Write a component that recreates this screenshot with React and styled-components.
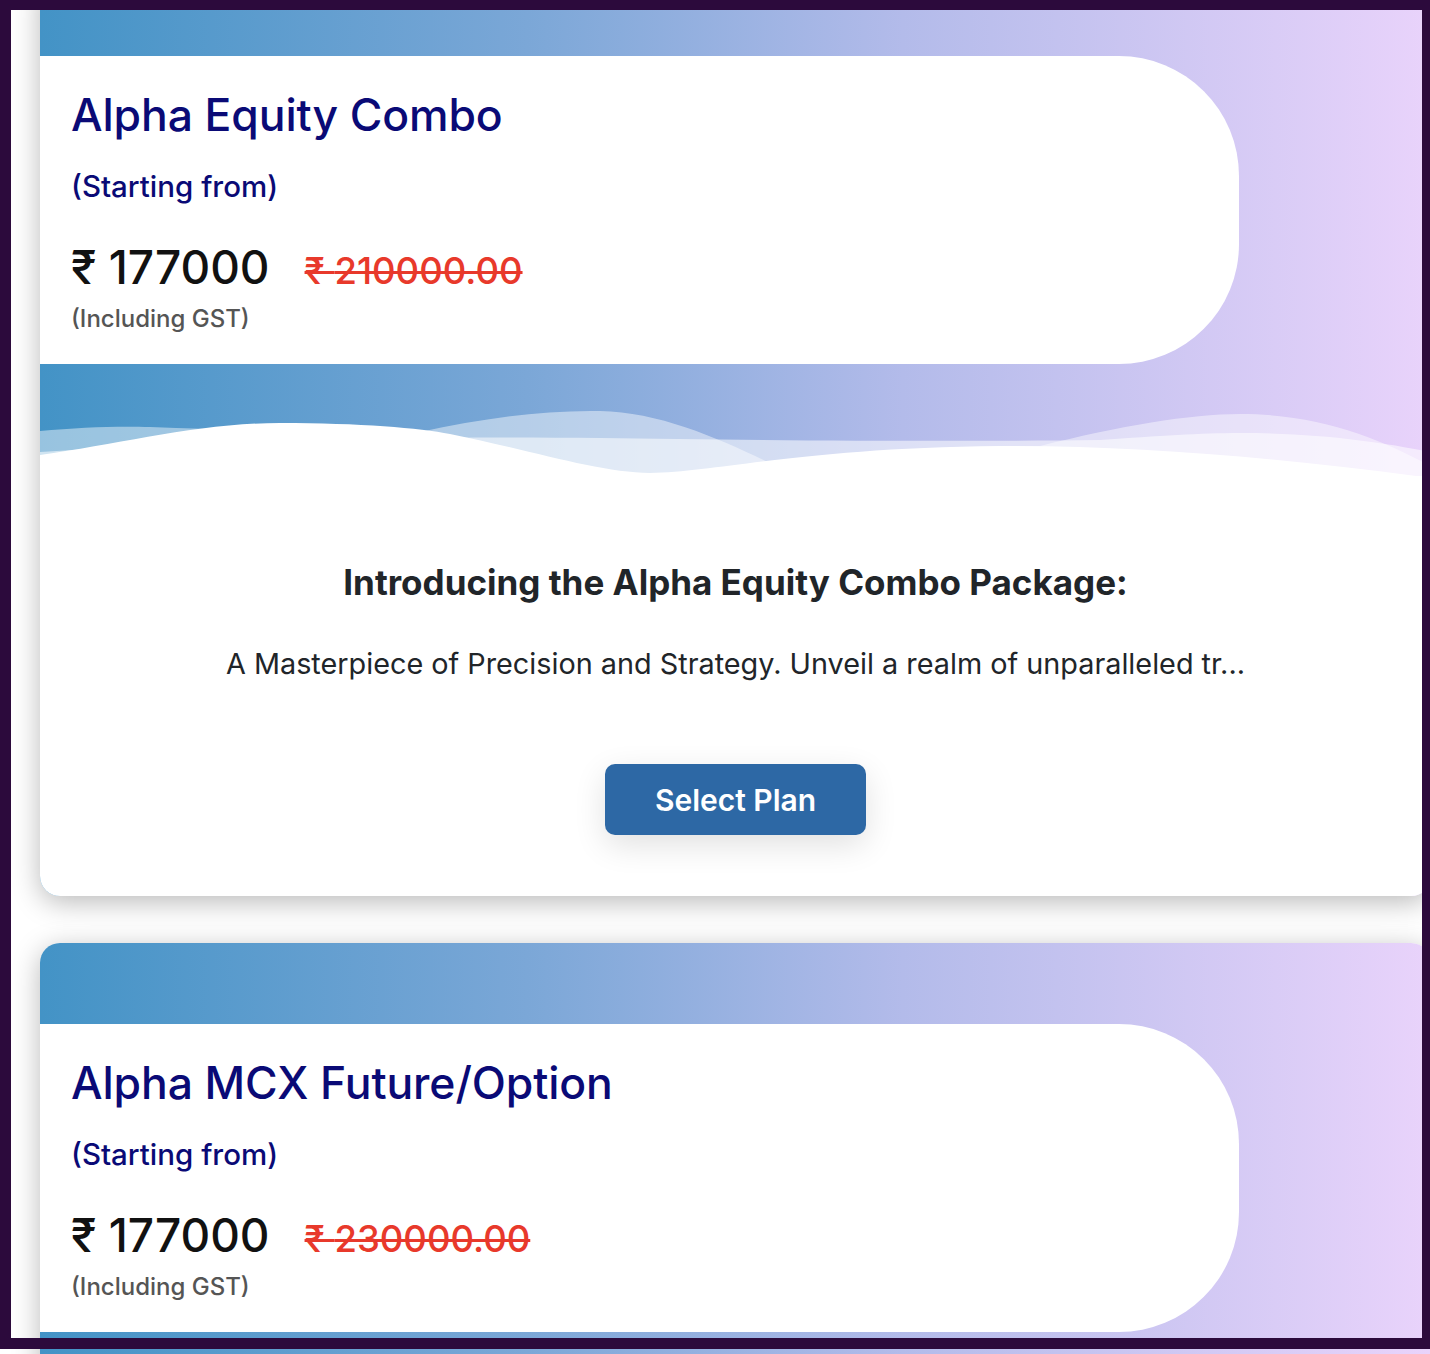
import { createGlobalStyle, styled } from 'styled-components';

const plans = [
  {
    title: 'Alpha Equity Combo',
    price: '177000',
    oldPrice: '210000.00',
    heading: 'Introducing the Alpha Equity Combo Package:',
    text: 'A Masterpiece of Precision and Strategy. Unveil a realm of unparalleled tr...',
  },
  {
    title: 'Alpha MCX Future/Option',
    price: '177000',
    oldPrice: '230000.00',
    heading: 'Introducing the Alpha MCX Future/Option Package:',
    text: 'Precision trading in commodities. Navigate the MCX markets with expert ca...',
  },
];

const GlobalStyle = createGlobalStyle`
  body {
    margin: 0;
    background: #ffffff;
    font-family: Inter, 'Noto Sans', 'Liberation Sans', sans-serif;
    overflow-x: hidden;
  }
`;

const Waves = () => (
  <WaveSvg viewBox="0 0 1391 112" preserveAspectRatio="none">
    <path
      d="M0,67 C40,63 80,62 110,63 C200,66 300,70 380,68 C440,55 500,46 560,47 C620,48 680,75 730,99 L1000,82 C1080,62 1150,50 1200,50 C1280,50 1340,75 1391,102 L1391,112 L0,112 Z"
      fill="#ffffff"
      fillOpacity="0.45"
    />
    <path
      d="M0,88 C200,75 400,72 560,74 C700,76 900,78 1060,76 C1120,72 1160,69 1200,69 C1280,69 1340,78 1391,88 L1391,112 L0,112 Z"
      fill="#ffffff"
      fillOpacity="0.55"
    />
    <path
      d="M0,91 C80,80 160,59 240,59 C320,59 380,64 410,70 C490,86 560,109 610,109 C680,108 760,84 960,82 C1100,81 1250,95 1391,114 L1391,112 L0,112 Z"
      fill="#ffffff"
    />
  </WaveSvg>
);

const PlanCard = ({ plan, first }) => (
  <Card $first={first}>
    <Panel>
      <Title>{plan.title}</Title>
      <Subtitle>(Starting from)</Subtitle>
      <PriceRow>
        <Price>₹ {plan.price}</Price>
        <OldPrice>₹ {plan.oldPrice}</OldPrice>
      </PriceRow>
      <Note>(Including GST)</Note>
    </Panel>
    <Waves />
    <Body>
      <Heading>{plan.heading}</Heading>
      <Description>{plan.text}</Description>
      <SelectButton>Select Plan</SelectButton>
    </Body>
  </Card>
);

export default function App() {
  return (
    <>
      <GlobalStyle />
      <Page>
        {plans.map((plan, index) => (
          <PlanCard key={plan.title} plan={plan} first={index === 0} />
        ))}
      </Page>
      <Frame />
    </>
  );
}

const Page = styled.main`
  display: flex;
  flex-direction: column;
  gap: 47px;
  padding: 0 0 60px 40px;
`;

const Card = styled.section`
  width: 1391px;
  margin-top: ${(p) => (p.$first ? '-25px' : '0')};
  padding-top: 81px;
  border-radius: 20px;
  overflow: hidden;
  background: linear-gradient(90deg, #4393c6 0%, #7ba7d7 35%, #b3bbea 62%, #e9d3fb 100%);
  box-shadow: 0 6px 28px rgba(0, 0, 0, 0.28);
`;

const Panel = styled.div`
  box-sizing: border-box;
  width: 1199px;
  height: 308px;
  padding: 33px 31px 0;
  background: #ffffff;
  border-radius: 0 120px 120px 0;
`;

const Title = styled.h2`
  margin: 0;
  font-size: 44.5px;
  line-height: 53px;
  font-weight: 500;
  letter-spacing: -0.1px;
  color: #0a0a76;
`;

const Subtitle = styled.div`
  margin-top: 27px;
  font-size: 29.5px;
  line-height: 34px;
  font-weight: 500;
  color: #0a0a76;
`;

const PriceRow = styled.div`
  display: flex;
  align-items: baseline;
  gap: 35px;
  margin-top: 38px;
`;

const Price = styled.span`
  font-size: 46px;
  line-height: 53px;
  font-weight: 500;
  color: #111111;
`;

const OldPrice = styled.span`
  font-size: 36.5px;
  font-weight: 500;
  color: #e8392b;
  text-decoration: line-through;
  text-decoration-thickness: 3px;
`;

const Note = styled.div`
  margin-top: 12px;
  font-size: 24px;
  line-height: 26px;
  font-weight: 500;
  color: #555555;
`;

const WaveSvg = styled.svg`
  display: block;
  width: 100%;
  height: 112px;
`;

const Body = styled.div`
  display: flex;
  flex-direction: column;
  align-items: center;
  padding: 85px 20px 61px;
  background: #ffffff;
  color: #212529;
  text-align: center;
`;

const Heading = styled.h3`
  margin: 0;
  font-size: 35px;
  line-height: 42px;
  font-weight: 700;
`;

const Description = styled.p`
  margin: 41px 0 0;
  font-size: 28.8px;
  line-height: 40px;
`;

const SelectButton = styled.button`
  margin-top: 80px;
  width: 261px;
  height: 71px;
  border: none;
  border-radius: 10px;
  background: #2d68a5;
  color: #ffffff;
  font-family: inherit;
  font-size: 30px;
  font-weight: 600;
  box-shadow: 0 10px 32px rgba(0, 0, 0, 0.12);
  cursor: pointer;
`;

const Frame = styled.div`
  position: fixed;
  top: 0;
  left: 0;
  box-sizing: border-box;
  width: 1430px;
  height: 1349px;
  border-style: solid;
  border-color: #2c0a3c;
  border-width: 10px 8px 11px 11px;
  pointer-events: none;
`;
